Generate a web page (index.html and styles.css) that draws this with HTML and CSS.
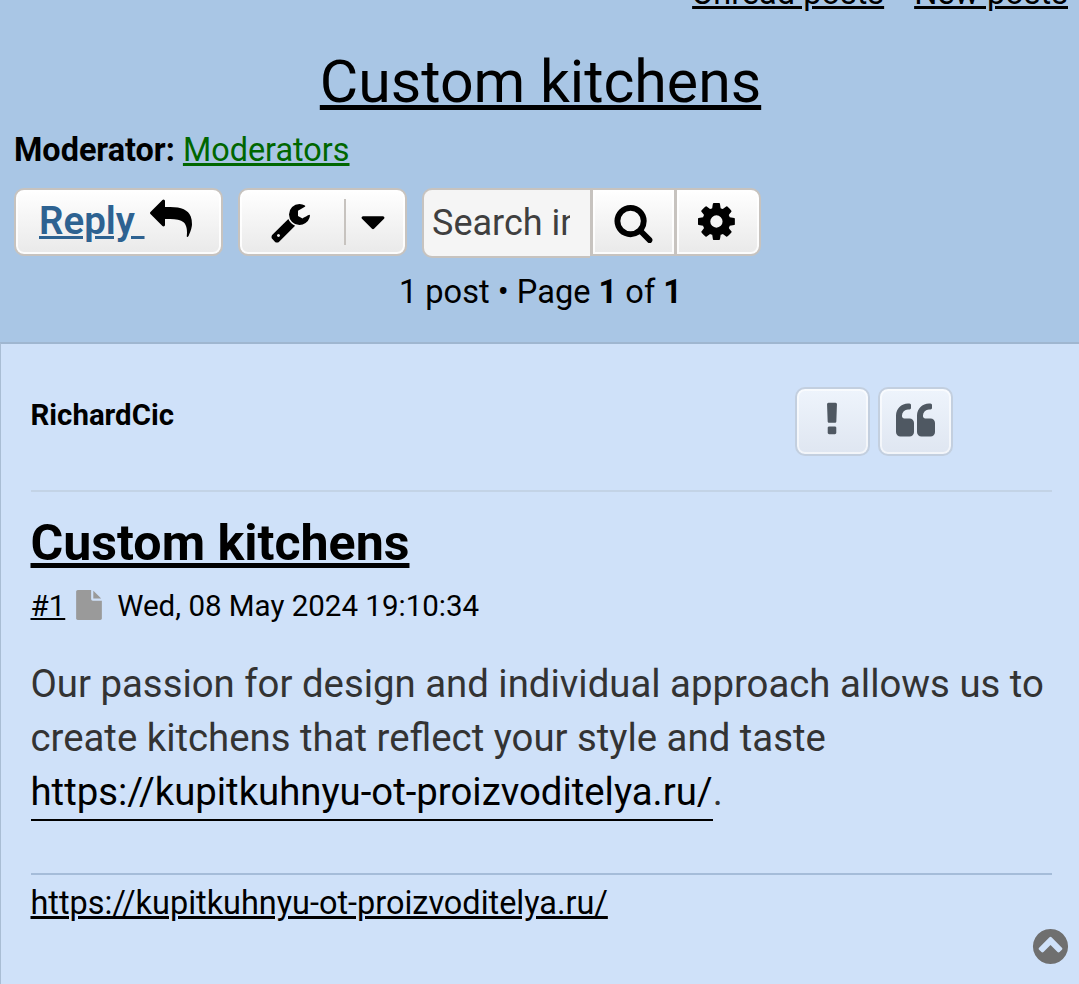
FILE: index.html
```html
<!DOCTYPE html>
<html lang="en">
<head>
<meta charset="utf-8">
<title>Custom kitchens</title>
<link rel="stylesheet" href="styles.css">
</head>
<body>
<div class="page">
  <header class="head">
    <nav class="toplinks"><a href="#">Unread posts</a><a href="#">New posts</a></nav>
    <h1 class="title"><a href="#">Custom kitchens</a></h1>
    <p class="mods"><strong>Moderator:</strong> <a href="#">Moderators</a></p>
    <div class="actions">
      <a class="btn reply" href="#"><span class="reply-text">Reply&nbsp;</span><svg class="ic ic-reply" viewBox="0 0 1792 1792"><path d="M1792 1120q0 166-127 451-3 7-10.5 24t-13.5 30-13 22q-12 17-28 17-15 0-23.5-10t-8.5-25q0-9 2.5-26.5t2.5-23.5q5-68 5-123 0-101-17.5-181t-48.5-138.5-80-101-105.5-69.5-133-42.5-154-21.5-175.5-6h-224v256q0 26-19 45t-45 19-45-19l-512-512q-19-19-19-45t19-45l512-512q19-19 45-19t45 19 19 45v256h224q713 0 875 403 53 134 53 333z"/></svg></a>
      <div class="btn tools">
        <svg class="ic ic-wrench" viewBox="0 0 1792 1792"><path d="M384 1472q0-26-19-45t-45-19-45 19-19 45 19 45 45 19 45-19 19-45zm644-420l-682 682q-37 37-90 37-52 0-91-37l-106-108q-38-36-38-90 0-53 38-91l681-681q39 98 114.5 173.5t173.5 114.5zm634-435q0 39-23 106-47 134-164.5 217.5t-258.5 83.5q-185 0-316.5-131.5t-131.5-316.5 131.5-316.5 316.5-131.5q58 0 121.5 16.5t107.5 46.5q16 11 16 28t-16 28l-293 169v224l193 107q5-3 79-48.5t135.5-81 70.5-35.5q15 0 23.5 10t8.5 25z"/></svg>
        <span class="caret-wrap"><svg class="ic ic-caret" viewBox="0 0 1792 1792"><path d="M1408 704q0 26-19 45l-448 448q-19 19-45 19t-45-19l-448-448q-19-19-19-45t19-45 45-19h896q26 0 45 19t19 45z"/></svg></span>
      </div>
      <div class="search">
        <input class="search-input" type="text" placeholder="Search in this topic">
        <a class="search-btn" href="#"><svg class="ic ic-search" viewBox="0 0 1792 1792"><path d="M1216 832q0-185-131.5-316.5t-316.5-131.5-316.5 131.5-131.5 316.5 131.5 316.5 316.5 131.5 316.5-131.5 131.5-316.5zm512 832q0 52-38 90t-90 38q-54 0-90-38l-343-342q-179 124-399 124-143 0-273.5-55.5t-225-150-150-225-55.5-273.5 55.5-273.5 150-225 225-150 273.5-55.5 273.5 55.5 225 150 150 225 55.5 273.5q0 220-124 399l343 343q37 37 37 90z"/></svg></a>
        <a class="search-btn last" href="#"><svg class="ic ic-cog" viewBox="0 0 1792 1792"><path d="M1024 896q0-106-75-181t-181-75-181 75-75 181 75 181 181 75 181-75 75-181zm512-109v222q0 12-8 23t-20 13l-185 28q-19 54-39 91 35 50 107 138 10 12 10 25t-9 23q-27 37-99 108t-94 71q-12 0-26-9l-138-108q-44 23-91 38-16 136-29 186-7 28-36 28h-222q-14 0-24.5-8.5t-11.5-21.5l-28-184q-49-16-90-37l-141 107q-10 9-25 9-14 0-25-11-126-114-165-168-7-10-7-23 0-12 8-23 15-21 51-66.5t54-70.5q-27-50-41-99l-183-27q-13-2-21-12.5t-8-23.5v-222q0-12 8-23t19-13l186-28q14-46 39-92-40-57-107-138-10-12-10-24 0-10 9-23 26-36 98.5-107.5t94.5-71.5q13 0 26 10l138 107q44-23 91-38 16-136 29-186 7-28 36-28h222q14 0 24.5 8.5t11.5 21.5l28 184q49 16 90 37l142-107q9-9 24-9 13 0 25 10 129 119 165 170 7 8 7 22 0 12-8 23-15 21-51 66.5t-54 70.5q26 50 41 98l183 28q13 2 21 12.5t8 23.5z"/></svg></a>
      </div>
    </div>
    <p class="pagination">1 post • Page <strong>1</strong> of <strong>1</strong></p>
  </header>
  <main class="post">
    <div class="post-top">
      <strong class="author">RichardCic</strong>
      <div class="post-btns">
        <a class="pbtn" href="#"><svg class="ic ic-excl" viewBox="0 0 1792 1792"><path d="M1088 1248v224q0 26-19 45t-45 19h-256q-26 0-45-19t-19-45v-224q0-26 19-45t45-19h256q26 0 45 19t19 45zm30-1056l-28 768q-1 26-20.5 45t-45.5 19h-256q-26 0-45.5-19t-20.5-45l-28-768q-1-26 17.5-45t44.5-19h320q26 0 44.5 19t17.5 45z"/></svg></a>
        <a class="pbtn" href="#"><svg class="ic ic-quote" viewBox="0 0 1792 1792"><path d="M768 1024v384q0 80-56 136t-136 56h-384q-80 0-136-56t-56-136v-704q0-104 40.5-198.5t109.5-163.5 163.5-109.5 198.5-40.5h64q26 0 45 19t19 45v128q0 26-19 45t-45 19h-64q-106 0-181 75t-75 181v32q0 40 28 68t68 28h224q80 0 136 56t56 136zm896 0v384q0 80-56 136t-136 56h-384q-80 0-136-56t-56-136v-704q0-104 40.5-198.5t109.5-163.5 163.5-109.5 198.5-40.5h64q26 0 45 19t19 45v128q0 26-19 45t-45 19h-64q-106 0-181 75t-75 181v32q0 40 28 68t68 28h224q80 0 136 56t56 136z"/></svg></a>
      </div>
    </div>
    <h2 class="post-title"><a href="#">Custom kitchens</a></h2>
    <p class="meta"><a href="#">#1</a><svg class="ic ic-file" viewBox="0 0 1792 1792"><path d="M1152 512v-472q22 14 36 28l408 408q14 14 28 36h-472zm-128 32q0 40 28 68t68 28h544v1056q0 40-28 68t-68 28h-1344q-40 0-68-28t-28-68v-1600q0-40 28-68t68-28h800v544z"/></svg><span>Wed, 08 May 2024 19:10:34</span></p>
    <p class="content">Our passion for design and individual approach allows us to create kitchens that reflect your style and taste <a href="#">https://kupitkuhnyu-ot-proizvoditelya.ru/</a>.</p>
    <div class="signature"><a href="#">https://kupitkuhnyu-ot-proizvoditelya.ru/</a></div>
  </main>
  <a class="totop" href="#"><svg class="ic ic-top" viewBox="0 0 1792 1792"><path d="M1293 1139l102-102q19-19 19-45t-19-45l-454-454q-19-19-45-19t-45 19l-454 454q-19 19-19 45t19 45l102 102q19 19 45 19t45-19l307-307 307 307q19 19 45 19t45-19zm371-243q0 209-103 385.5t-279.5 279.5-385.5 103-385.5-103-279.5-279.5-103-385.5 103-385.5 279.5-279.5 385.5-103 385.5 103 279.5 279.5 103 385.5z"/></svg></a>
</div>
</body>
</html>
```
FILE: styles.css
```css
html, body { margin: 0; padding: 0; }
body { font-family: Roboto, "Liberation Sans", sans-serif; color: #000; background: #cfe1f9; }
a { color: inherit; }
.page { position: relative; width: 1079px; height: 984px; overflow: hidden; }
.ic { display: block; fill: currentColor; }

.head { display: flow-root; height: 342px; box-sizing: border-box; background: #a9c6e5; padding: 0 14px; }
.toplinks { display: flex; justify-content: flex-end; gap: 30px; margin: -26px -3px 0 0; font-size: 32.5px; line-height: 38px; }
.title { margin: 35px 0 0; padding-left: 2px; text-align: center; font-size: 59px; line-height: 69px; font-weight: 400; }
.mods { margin: 16px 0 0; font-size: 32.4px; line-height: 36px; }
.mods a { color: #006600; }
.actions { display: flex; gap: 15px; margin-top: 20px; }
.btn { box-sizing: border-box; height: 68px; display: flex; align-items: center; background: linear-gradient(#fff, #e9e9e9); border: 2px solid #c7c3bf; border-radius: 10px; box-shadow: inset 0 0 0 2px rgba(255,255,255,.85); text-decoration: none; }
.reply { width: 209px; padding-left: 23px; }
.reply-text { color: #2d6291; font-size: 38.5px; font-weight: 600; text-decoration: underline; margin-top: -4px; }
.ic-reply { width: 42px; height: 42px; margin-left: 5px; margin-top: -7px; }
.tools { width: 169px; padding-left: 31px; }
.ic-wrench { width: 42px; height: 42px; }
.caret-wrap { display: flex; justify-content: center; align-items: center; margin-left: 31px; height: 46px; width: 54px; border-left: 2px solid #c7c3bf; }
.ic-caret { width: 40px; height: 40px; }
.search { display: flex; height: 70px; }
.search-input { box-sizing: border-box; width: 168px; height: 70px; padding: 0 20px 0 8px; border: 2px solid #c7c3bf; border-right: 0; border-radius: 10px 0 0 10px; background: #f5f5f5; font: 36px Roboto, sans-serif; color: #333; outline: 0; }
.search-input::placeholder { color: #3f3f3f; opacity: 1; }
.search-btn { box-sizing: border-box; width: 84px; height: 68px; display: flex; justify-content: center; align-items: center; background: linear-gradient(#fff, #e9e9e9); border: 2px solid #c7c3bf; border-width: 2px 0 2px 3px; box-shadow: inset 0 0 0 2px rgba(255,255,255,.85); }
.search-btn.last { width: 87px; border-right: 2px solid #c7c3bf; border-radius: 0 10px 10px 0; }
.ic-search { width: 41px; height: 41px; margin-right: 1px; }
.ic-cog { width: 43px; height: 43px; margin: -2px 0 0 3px; }
.pagination { margin: 15px 0 0; padding-left: 2px; text-align: center; font-size: 32.6px; line-height: 38px; }

.post { box-sizing: border-box; height: 642px; padding: 0 27.5px 0 29.5px; background: #cfe1f9; border-left: 1px solid #a9bdd4; border-top: 2px solid #9fb6d0; }
.post-top { display: flex; align-items: flex-start; height: 148px; box-sizing: border-box; border-bottom: 2px solid #c3d3e6; }
.author { font-size: 29.4px; line-height: 34px; margin-top: 54px; font-weight: 700; }
.post-btns { display: flex; gap: 8px; margin: 43px 99px 0 auto; }
.pbtn { box-sizing: border-box; width: 75px; height: 69px; display: flex; justify-content: center; align-items: center; color: #4f5862; background: linear-gradient(#eef4fc, #dfe6f1); border: 2px solid #c3cfdf; border-radius: 10px; box-shadow: inset 0 0 0 2px rgba(255,255,255,.6); }
.ic-excl { width: 40px; height: 40px; margin-top: -4px; }
.ic-quote { width: 42px; height: 42px; margin: -4px 0 0 3px; }
.post-title { margin: 23px 0 0; font-size: 50.1px; line-height: 56px; font-weight: 700; }
.meta { display: flex; align-items: center; margin: 18px 0 0; font-size: 29.5px; line-height: 34px; }
.ic-file { width: 30px; height: 30px; margin: -2px 13px 0 9px; color: #9a9a9a; }
.content { margin: 34px 0 0; font-size: 38.35px; line-height: 54px; color: #333; }
.content a { color: #000; text-decoration: none; border-bottom: 2px solid #000; padding-bottom: 5px; }
.signature { margin-top: 54px; padding-top: 9px; border-top: 2px solid #a5bcd9; font-size: 32.45px; line-height: 38px; }
.totop { position: absolute; left: 1030px; top: 926px; color: #6f6f6f; }
.ic-top { width: 41px; height: 41px; }
```
